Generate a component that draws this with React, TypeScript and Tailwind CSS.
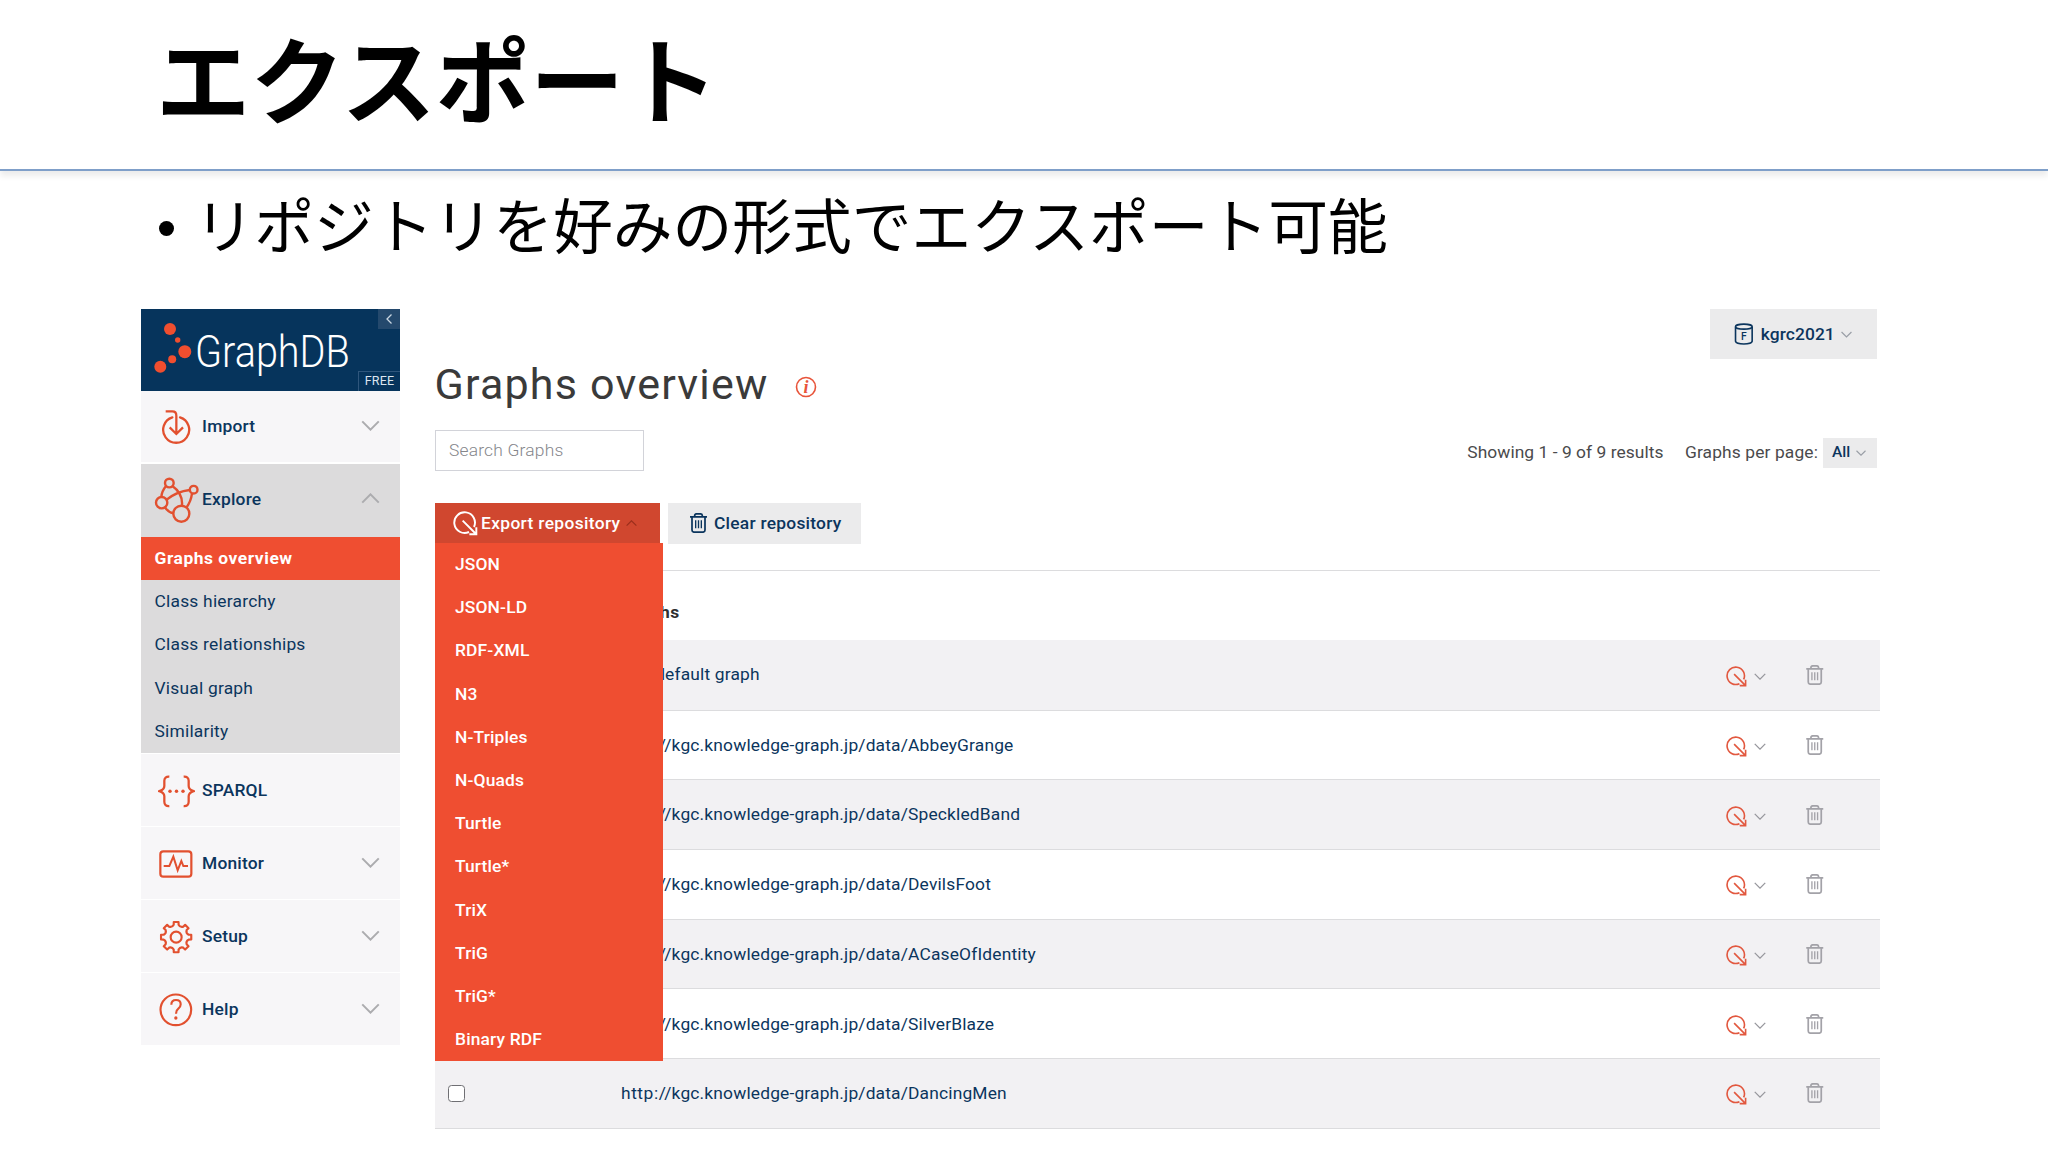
import type { ReactNode } from "react";
import clsx from "clsx";

type IconProps = { className?: string };

const FORMATS = [
  "JSON",
  "JSON-LD",
  "RDF-XML",
  "N3",
  "N-Triples",
  "N-Quads",
  "Turtle",
  "Turtle*",
  "TriX",
  "TriG",
  "TriG*",
  "Binary RDF",
];

const GRAPHS = [
  "The default graph",
  "http://kgc.knowledge-graph.jp/data/AbbeyGrange",
  "http://kgc.knowledge-graph.jp/data/SpeckledBand",
  "http://kgc.knowledge-graph.jp/data/DevilsFoot",
  "http://kgc.knowledge-graph.jp/data/ACaseOfIdentity",
  "http://kgc.knowledge-graph.jp/data/SilverBlaze",
  "http://kgc.knowledge-graph.jp/data/DancingMen",
];

const EXPLORE_ITEMS = ["Class hierarchy", "Class relationships", "Visual graph", "Similarity"];

function Chevron({ up = false, className }: IconProps & { up?: boolean }) {
  return (
    <svg viewBox="0 0 20 12" className={className} fill="none" stroke="currentColor" strokeWidth="2.2">
      <path d={up ? "M1 10.5 10 1.5l9 9" : "M1 1.5l9 9 9-9"} />
    </svg>
  );
}

function ExportIcon({ className }: IconProps) {
  return (
    <svg viewBox="98 482 75 75" className={className} fill="none" stroke="currentColor" strokeWidth="5.8">
      <path d="M146 545A31 31 0 1 1 161 530" />
      <path d="M127 511l40 40M147 552h21v-21" />
    </svg>
  );
}

function TrashIcon({ className }: IconProps) {
  return (
    <svg viewBox="0 0 51 60" className={className} fill="none" stroke="currentColor" strokeWidth="5.2">
      <path d="M0 11.5h51M14 11V8q0-5.500 6-5.500h11q6 0 6 5.500v3M6 11v40q0 6.500 6.500 6.500h26q6.500 0 6.500-6.500V11" />
      <path d="M17 22v24M25.500 22v24M34 22v24" strokeWidth="4" />
    </svg>
  );
}

function ImportIcon() {
  return (
    <svg viewBox="92 328 92 108" className="h-9 w-[30.7px]" fill="none" stroke="currentColor" strokeWidth="6.8">
      <path d="M149 353A39 39 0 1 1 126 353" strokeLinecap="round" />
      <path d="M106 335h20q12 0 12 13v54M118 383l20 20 20-20" />
    </svg>
  );
}

function ExploreIcon() {
  return (
    <svg viewBox="69 535 135 140" className="h-[46.7px] w-[45px]" fill="none" stroke="currentColor" strokeWidth="7.2">
      <circle cx="115" cy="553" r="13" />
      <circle cx="188" cy="573" r="11.5" />
      <circle cx="92" cy="612" r="17" />
      <circle cx="151" cy="645" r="24" />
      <path d="M105 562Q92 578 91 595M107 603Q138 578 176 574M124 562Q156 584 153 621M183 584Q180 608 166 627M102 626Q111 641 128 644" />
    </svg>
  );
}

function SparqlIcon() {
  return (
    <svg viewBox="82 70 111 104" className="h-[34.7px] w-[37px]" fill="none" stroke="currentColor" strokeWidth="6.8">
      <path d="M116 78Q101 77 101 90V106Q101 117 86 121.500Q101 126 101 137V153Q101 167 116 166" />
      <path d="M159 78Q174 77 174 90V106Q174 117 189 121.500Q174 126 174 137V153Q174 167 159 166" />
      <g fill="currentColor" stroke="none">
        <circle cx="118" cy="122" r="5.2" />
        <circle cx="137.5" cy="122" r="5.2" />
        <circle cx="157" cy="122" r="5.2" />
      </g>
    </svg>
  );
}

function MonitorIcon() {
  return (
    <svg viewBox="87 299 101 84" className="h-7 w-[33.7px]" fill="none" stroke="currentColor" strokeWidth="6.6">
      <rect x="91" y="303" width="93" height="76" rx="9" />
      <path d="M101 347h17l12-28 13 41 11-28 6 15h14" strokeWidth="6" />
    </svg>
  );
}

function gearPath(cx: number, cy: number) {
  const at = (r: number, deg: number) => {
    const rad = (deg * Math.PI) / 180;
    return `${(cx + r * Math.cos(rad)).toFixed(1)} ${(cy + r * Math.sin(rad)).toFixed(1)}`;
  };
  const teeth = Array.from({ length: 8 }, (_, i) => {
    const a = i * 45;
    return `L${at(46, a - 9)}L${at(46, a + 9)}L${at(38, a + 11)}Q${at(31, a + 22.5)} ${at(38, a + 34)}`;
  });
  return `M${at(38, -11)}${teeth.join("")}Z`;
}

function SetupIcon() {
  return (
    <svg viewBox="86 508 103 103" className="size-[34.3px]" fill="none" stroke="currentColor" strokeWidth="6.4">
      <path d={gearPath(137.5, 559.5)} strokeLinejoin="round" />
      <circle cx="137.5" cy="559.5" r="16.5" />
    </svg>
  );
}

function HelpIcon() {
  return (
    <svg viewBox="87 728 101 101" className="size-[33.7px]" fill="none" stroke="currentColor" strokeWidth="6.4">
      <circle cx="137.5" cy="778.5" r="46" />
      <path d="M124 763q0-14 14-14t14 13q0 8-7 13t-7 15" />
      <circle cx="137.5" cy="803" r="5" fill="currentColor" stroke="none" />
    </svg>
  );
}

function DatabaseIcon() {
  return (
    <svg viewBox="882 73 59 67" className="h-[22.3px] w-[19.7px]" fill="none" stroke="currentColor" strokeWidth="4.8">
      <ellipse cx="911.5" cy="84" rx="25" ry="7.5" />
      <path d="M886.5 84v44q2 8 25 8t25-8V84" />
      <text
        x="911.5"
        y="124.5"
        textAnchor="middle"
        fontSize="31"
        fontWeight="500"
        fill="currentColor"
        stroke="none"
      >
        F
      </text>
    </svg>
  );
}

type NavRowProps = {
  label: string;
  icon: ReactNode;
  arrow?: "up" | "down";
  active?: boolean;
};

function NavRow({ label, icon, arrow, active = false }: NavRowProps) {
  return (
    <div className={clsx("flex h-[71.5px] items-center pl-[10px]", active ? "bg-[#dcdbdc]" : "bg-[#f7f6f8]")}>
      <span className="flex w-[50px] justify-center pt-[2px] text-[#e2502f]">{icon}</span>
      <span className="ml-[1px] pb-[1px] text-[17.4px] font-medium tracking-[0.2px]">{label}</span>
      {arrow && (
        <Chevron up={arrow === "up"} className="mr-[20.5px] mb-[2px] ml-auto h-[11px] w-[19px] text-[#acacaf]" />
      )}
    </div>
  );
}

function Sidebar() {
  return (
    <aside className="w-[259px] shrink-0 text-[#0b355d]">
      <div className="relative flex h-[81.5px] bg-[#06345c]">
        <svg viewBox="0 0 56 81" className="h-[81px] w-14 shrink-0" fill="#f04e2f">
          <circle cx="29" cy="20" r="6" />
          <circle cx="36.7" cy="31" r="2.7" />
          <circle cx="43.8" cy="42.7" r="6.5" />
          <circle cx="31.2" cy="50.3" r="4" />
          <circle cx="19.3" cy="57.7" r="6" />
        </svg>
        <span className="mt-[18px] -ml-[2px] origin-left scale-x-[0.88] text-[45px] leading-[50px] font-light text-white">
          GraphDB
        </span>
        <span className="absolute top-0 right-0 flex h-5 w-[22px] items-center justify-center bg-[#24496d] text-[#c9d6e2]">
          <svg viewBox="0 0 6 10" className="h-[10px] w-[6px]" fill="none" stroke="currentColor" strokeWidth="1.3">
            <path d="M5.5.5 1 5l4.500 4.500" />
          </svg>
        </span>
        <span className="absolute right-0 bottom-0 flex h-5 w-[42px] items-center justify-center border-t border-l border-[#2f567c] text-[12.5px] tracking-[0.2px] text-[#dce6ef]">
          FREE
        </span>
      </div>
      <NavRow label="Import" icon={<ImportIcon />} arrow="down" />
      <div className="mt-[2px] bg-[#dcdbdc]">
        <NavRow label="Explore" icon={<ExploreIcon />} arrow="up" active />
        <ul className="mt-[1px] text-[17.4px]">
          <li className="flex h-[43.6px] items-center bg-[#ef4e31] pl-[13.5px] font-bold tracking-[0.55px] text-white">
            Graphs overview
          </li>
          {EXPLORE_ITEMS.map((item) => (
            <li key={item} className="flex h-[43.2px] items-center pb-[1px] pl-[13.5px] tracking-[0.22px]">
              {item}
            </li>
          ))}
        </ul>
      </div>
      <div className="mt-[1.5px] flex flex-col gap-[1.5px]">
        <NavRow label="SPARQL" icon={<SparqlIcon />} />
        <NavRow label="Monitor" icon={<MonitorIcon />} arrow="down" />
        <NavRow label="Setup" icon={<SetupIcon />} arrow="down" />
        <NavRow label="Help" icon={<HelpIcon />} arrow="down" />
      </div>
    </aside>
  );
}

function Toolbar() {
  return (
    <div className="mt-8 flex h-[40.5px] gap-[8px] text-[17.4px] font-medium">
      <div className="relative">
        <button className="flex h-full w-[225px] items-center bg-[#d0472f] pl-[18px] text-white">
          <ExportIcon className="size-[25px]" />
          <span className="ml-[3.5px] tracking-[0.35px]">Export repository</span>
          <Chevron up className="ml-[6px] h-[6.5px] w-[11px] text-[#9c2f1c]" />
        </button>
        <ul className="absolute top-[39.5px] left-0 z-10 w-[228.5px] bg-[#ef4e31] text-white">
          {FORMATS.map((format) => (
            <li key={format} className="flex h-[43.2px] items-center pl-[20.5px] tracking-[0.15px]">
              {format}
            </li>
          ))}
        </ul>
      </div>
      <button className="flex w-[193px] items-center bg-[#ebebec] pl-[22px] text-[#0b355d]">
        <TrashIcon className="h-5 w-[17px]" />
        <span className="ml-[7.5px] tracking-[0.25px]">Clear repository</span>
      </button>
    </div>
  );
}

function GraphName({ name }: { name: string }) {
  const [scheme, rest] = name.split("//");
  if (!rest) {
    return <>{name}</>;
  }
  return (
    <>
      <span className="tracking-[0.55px]">{scheme}</span>
      <span className="tracking-[-1.6px]">/</span>/{rest}
    </>
  );
}

function GraphRow({ name, index }: { name: string; index: number }) {
  return (
    <div
      className={clsx(
        "flex items-center border-b border-[#dcdcde]",
        index === 0 ? "h-[71px]" : "h-[69.7px]",
        index % 2 === 0 ? "bg-[#f2f1f3]" : "bg-white"
      )}
    >
      <span className="ml-[13px] size-[17px] rounded-[3.5px] border-[1.5px] border-[#6f6f73] bg-white" />
      <span className="ml-[156.5px] text-[17.4px] tracking-[0.16px] text-[#0b355d]">
        <GraphName name={name} />
      </span>
      <ExportIcon className="mt-[3px] ml-auto size-[21px] text-[#e2583f]" />
      <Chevron className="mt-[3px] ml-[7.5px] h-[7px] w-[12px] text-[#96969c]" />
      <TrashIcon className="mr-[56.5px] ml-[40px] h-5 w-[17.5px] text-[#a3a2a8]" />
    </div>
  );
}

function GraphsOverview() {
  return (
    <main className="ml-[34.5px] w-[1445.5px]">
      <div className="mr-[3px] flex justify-end">
        <button className="flex h-[50px] w-[167px] items-center bg-[#ebebec] pl-6 text-[17.4px] font-medium text-[#0b355d]">
          <DatabaseIcon />
          <span className="ml-[7px] tracking-[0.1px]">kgrc2021</span>
          <Chevron className="ml-[6px] h-[7px] w-[11px] text-[#999ea6]" />
        </button>
      </div>
      <div className="flex h-[50px] items-center">
        <h2 className="text-[43px] tracking-[1.2px] text-[#3a3a3a]">Graphs overview</h2>
        <svg viewBox="0 0 22 22" className="mt-[6px] ml-[26px] size-[22px] text-[#e8543a]">
          <circle cx="11" cy="11" r="9.5" fill="none" stroke="currentColor" strokeWidth="1.6" />
          <text
            x="11"
            y="16.5"
            textAnchor="middle"
            fontSize="18"
            fontStyle="italic"
            fontWeight="bold"
            fontFamily="Liberation Serif"
            fill="currentColor"
          >
            i
          </text>
        </svg>
      </div>
      <div className="mt-[21px] flex h-[41px] items-center text-[17.4px] text-[#4a4a4c]">
        <input
          type="text"
          placeholder="Search Graphs"
          className="h-full w-[209px] border border-[#d2d3d9] px-[13.5px] pb-[1px] font-light tracking-[0.2px] placeholder:text-[#85868b]"
        />
        <span className="mt-[3px] ml-auto tracking-[0.05px]">Showing 1 - 9 of 9 results</span>
        <span className="mt-[4px] ml-[21.5px] tracking-[0.12px]">Graphs per page:</span>
        <button className="mt-[5px] mr-[3px] ml-[5px] flex h-[30px] w-[54px] items-center bg-[#ebebec] pl-[9px] text-[15.5px] font-medium text-[#0b355d]">
          All
          <Chevron className="ml-[6px] h-[6px] w-[10px] shrink-0 text-[#999ea6]" />
        </button>
      </div>
      <Toolbar />
      <div className="mt-[26.5px] border-t border-[#dcdcde]">
        <div className="flex h-[68.5px] items-center pt-[14px] pl-[186.5px] text-[17.4px] font-bold tracking-[0.5px] text-[#2f2f31]">
          Graphs
        </div>
        {GRAPHS.map((name, i) => (
          <GraphRow key={name} name={name} index={i} />
        ))}
      </div>
    </main>
  );
}

export default function App() {
  return (
    <div className="h-[1152px] w-[2048px] overflow-hidden bg-white font-['Roboto','Noto_Sans_CJK_JP',sans-serif]">
      <header className="h-[171px] border-b-2 border-[#7f9fc9] pl-[156px] shadow-[0_5px_6px_rgba(0,0,0,0.08)]">
        <h1 className="pt-[7px] font-['Noto_Sans_CJK_JP',sans-serif] text-[94.2px] leading-[138px] font-bold text-black">
          エクスポート
        </h1>
      </header>
      <div className="flex h-[138px] items-center pb-[24px] pl-[158.5px] font-['Noto_Sans_CJK_JP',sans-serif]">
        <span className="size-[15px] rounded-full bg-black" />
        <p className="mb-[9px] ml-[21px] text-[59.75px] leading-none text-black">
          リポジトリを好みの形式でエクスポート可能
        </p>
      </div>
      <div className="flex pl-[141px]">
        <Sidebar />
        <GraphsOverview />
      </div>
    </div>
  );
}
